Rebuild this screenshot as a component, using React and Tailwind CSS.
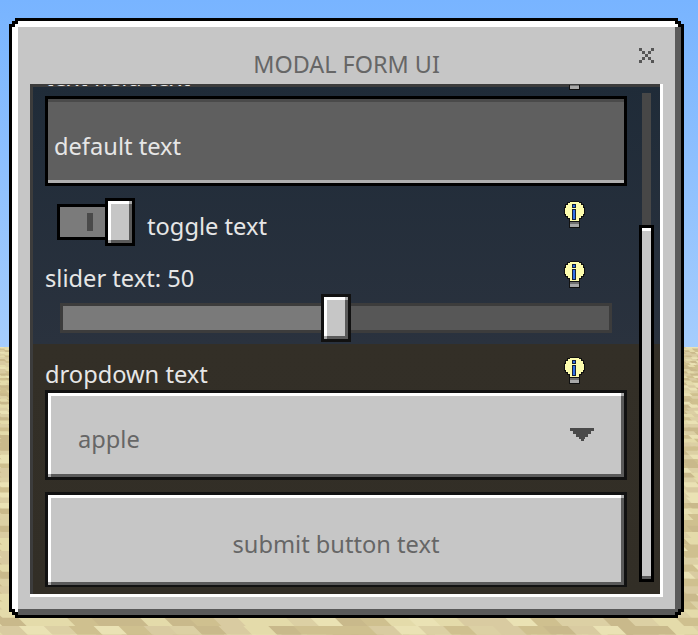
const sandPatches = [];
let seed = 7;
const rnd = () => {
  seed = (seed * 16807) % 2147483647;
  return seed / 2147483647;
};
const sandColors = ["#d9cba1", "#e4dbaa", "#cfc08f", "#dcd0a4", "#c9b98b", "#eae2b4"];
for (let y = 347; y < 635; ) {
  const t = (y - 347) / 288;
  const h = 2 + t * 9;
  const w = 6 + t * 26;
  for (let x = -w; x < 698 + w; x += w * 0.8) {
    const c = sandColors[Math.floor(rnd() * sandColors.length)];
    const skew = w * 0.35;
    sandPatches.push(
      <polygon
        key={`${y}-${x}`}
        fill={c}
        points={`${x},${y} ${x + w},${y} ${x + w + skew},${y + h} ${x + skew},${y + h}`}
      />
    );
  }
  y += h * 0.8;
}

const World = () => (
  <svg className="absolute inset-0" width="698" height="635" viewBox="0 0 698 635">
    <defs>
      <linearGradient id="sky" x1="0" y1="0" x2="0" y2="1">
        <stop offset="0" stopColor="#78b4ff" />
        <stop offset="1" stopColor="#a5cdfd" />
      </linearGradient>
    </defs>
    <rect width="698" height="347" fill="url(#sky)" />
    <rect y="347" width="698" height="288" fill="#d9cba1" />
    {sandPatches}
  </svg>
);

const Bulb = () => (
  <svg width="21" height="27" viewBox="0 0 21 27" shapeRendering="crispEdges" className="block">
    <rect x="5" y="18" width="11" height="9" fill="#111" />
    <rect x="6" y="21" width="9" height="5" fill="#a8a8a8" />
    <rect x="6" y="21" width="9" height="2" fill="#707070" />
    <polygon
      fill="#111"
      points="6,0 15,0 15,1 18,1 18,3 20,3 20,6 21,6 21,14 20,14 20,16 18,16 18,18 16,18 16,21 5,21 5,18 3,18 3,16 1,16 1,14 0,14 0,6 1,6 1,3 3,3 3,1 6,1"
    />
    <polygon
      fill="#fdfdae"
      points="6,1 15,1 15,2 17,2 17,4 19,4 19,7 20,7 20,13 19,13 19,15 17,15 17,17 15,17 15,20 6,20 6,17 4,17 4,15 2,15 2,13 1,13 1,7 2,7 2,4 4,4 4,2 6,2"
    />
    <rect x="8" y="3" width="4" height="4" fill="#14203a" />
    <rect x="8" y="8" width="4" height="11" fill="#14203a" />
    <rect x="9" y="4" width="2" height="2" fill="#2f6fe6" />
    <rect x="9" y="9" width="2" height="9" fill="#2f6fe6" />
  </svg>
);

const Label = ({ text, leading = "leading-[40px]" }) => (
  <div className={`flex h-[36px] items-start justify-between pr-[42px] text-[23.65px] text-[#e6e6e6] ${leading}`}>
    <span>{text}</span>
    <div className="pt-[3px]">
      <Bulb />
    </div>
  </div>
);

// raised block: white top/left, dark right/bottom, mid grey on the two odd corners
const Bevel = ({ className, children }) => (
  <div className={`relative bg-[#c6c6c6] shadow-[inset_3px_3px_0_#fff,inset_-3px_-3px_0_#5a5a5a] ${className}`}>
    <span className="absolute right-0 top-0 size-[3px] bg-[#a8a8a8]" />
    <span className="absolute bottom-0 left-0 size-[3px] bg-[#a8a8a8]" />
    {children}
  </div>
);

const TextField = () => (
  <div className="h-[90px] border-[3px] border-black bg-[#5f5f5f] pl-[6px] pt-[5px] text-[23.65px] leading-[84px] text-[#e6e6e6] shadow-[inset_0_3px_0_#4a4a4a,inset_0_-3px_0_#b0b0b0]">
    default text
  </div>
);

const Toggle = () => (
  <div className="mt-[12px] flex h-[48px] items-start pl-[12px] pr-[42px]">
    <div className="relative h-[48px] w-[78px]">
      <div className="absolute left-0 top-[6px] flex h-[36px] w-[52px] items-center border-[3px] border-black bg-[#7b7b7b] pl-[27px]">
        <span className="h-[18px] w-[6px] bg-[#4a4a4a]" />
      </div>
      <div className="absolute left-[48px] top-0 border-[3px] border-black">
        <Bevel className="h-[42px] w-[24px]" />
      </div>
    </div>
    <span className="ml-[12px] flex-1 pt-[16px] text-[23.65px] leading-[24px] text-[#e6e6e6]">toggle text</span>
    <div className="pt-[3px]">
      <Bulb />
    </div>
  </div>
);

const Slider = () => (
  <div className="flex h-[48px] items-center px-[15px]">
    <div className="relative h-[30px] w-full border-[3px] border-[#3c3c3c] bg-[#575757]">
      <div className="h-full w-1/2 bg-[#7a7a7a]" />
      <div className="absolute left-[258px] top-[-12px] border-[3px] border-[#111]">
        <Bevel className="h-[42px] w-[24px]" />
      </div>
    </div>
  </div>
);

const Dropdown = () => (
  <div className="border-[3px] border-[#111]">
    <Bevel className="flex h-[84px] items-center justify-between pl-[30px] pr-[30px] text-[23.65px] text-[#666]">
      <span className="pt-[10px]">apple</span>
      <svg width="24" height="13" viewBox="0 0 24 13" shapeRendering="crispEdges" className="mb-[1px]">
        <polygon
          fill="#4a4a4a"
          points="0,0 24,0 24,3 21,3 21,6 18,6 18,9 15,9 15,11 13.5,11 13.5,13 10.5,13 10.5,11 9,11 9,9 6,9 6,6 3,6 3,3 0,3"
        />
      </svg>
    </Bevel>
  </div>
);

const SubmitButton = () => (
  <div className="mt-[12px] border-x-[3px] border-b-[2px] border-t-[3px] border-[#111]">
    <Bevel className="flex h-[90px] items-center justify-center pt-[10px] text-[23.65px] text-[#666]">
      submit button text
    </Bevel>
  </div>
);

const Scrollbar = () => (
  <div className="ml-[12px] w-[15px] shrink-0 pt-[8px]">
    <div className="mx-[3px] h-[132px] bg-[#474747]" />
    <div className="h-[357px] border-[3px] border-black">
      <div className="h-full bg-[#c6c6c6] shadow-[inset_0_3px_0_#fff,inset_0_-3px_0_#5a5a5a]" />
    </div>
  </div>
);

const CloseIcon = () => (
  <svg width="15" height="15" viewBox="0 0 5 5" shapeRendering="crispEdges" className="absolute right-[27px] top-[27px]">
    <path
      fill="#555"
      d="M0 0h1v1H0zM4 0h1v1H4zM1 1h1v1H1zM3 1h1v1H3zM2 2h1v1H2zM1 3h1v1H1zM3 3h1v1H3zM0 4h1v1H0zM4 4h1v1H4z"
    />
  </svg>
);

export default function App() {
  return (
    <div
      className="relative h-[635px] w-[698px] overflow-hidden pl-[9px] pt-[18px]"
      style={{ fontFamily: '"Noto Sans", sans-serif' }}
    >
      <World />
      <div className="relative h-[600px] w-[675px] bg-black p-[3px] [clip-path:polygon(6px_0,669px_0,669px_3px,672px_3px,672px_6px,675px_6px,675px_594px,672px_594px,672px_597px,669px_597px,669px_600px,6px_600px,6px_597px,3px_597px,3px_594px,0_594px,0_6px,3px_6px,3px_3px,6px_3px)]">
        <div className="relative flex h-[594px] w-[669px] flex-col bg-[#c6c6c6] shadow-[inset_6px_6px_0_#fff,inset_-6px_-6px_0_#5a5a5a] [clip-path:polygon(6px_0,663px_0,663px_3px,666px_3px,666px_6px,669px_6px,669px_588px,666px_588px,666px_591px,663px_591px,663px_594px,6px_594px,6px_591px,3px_591px,3px_588px,0_588px,0_6px,3px_6px,3px_3px,6px_3px)]">
          <div className="flex h-[63px] shrink-0 items-center justify-center pt-[24px] text-[23.4px] text-[#666]">
            MODAL FORM UI
          </div>
          <CloseIcon />
          <div className="mx-[18px] mb-[18px] h-[513px] bg-[linear-gradient(#1f2b38,#2a323e_260px,#332f27_260px,#322e26)] px-[3px] pb-[3px] pt-[1px] shadow-[inset_-3px_-3px_0_#fff,inset_3px_3px_0_#3c3c3c]">
            <div className="flex h-[509px] overflow-hidden pl-[12px]">
              <div className="mt-[-25px] w-[582px] shrink-0">
                <Label text="text field text" leading="leading-[34px]" />
                <TextField />
                <Toggle />
                <div className="mt-[12px]">
                  <Label text="slider text: 50" />
                </div>
                <Slider />
                <div className="mt-[12px]">
                  <Label text="dropdown text" />
                </div>
                <Dropdown />
                <SubmitButton />
              </div>
              <Scrollbar />
            </div>
          </div>
        </div>
      </div>
    </div>
  );
}
